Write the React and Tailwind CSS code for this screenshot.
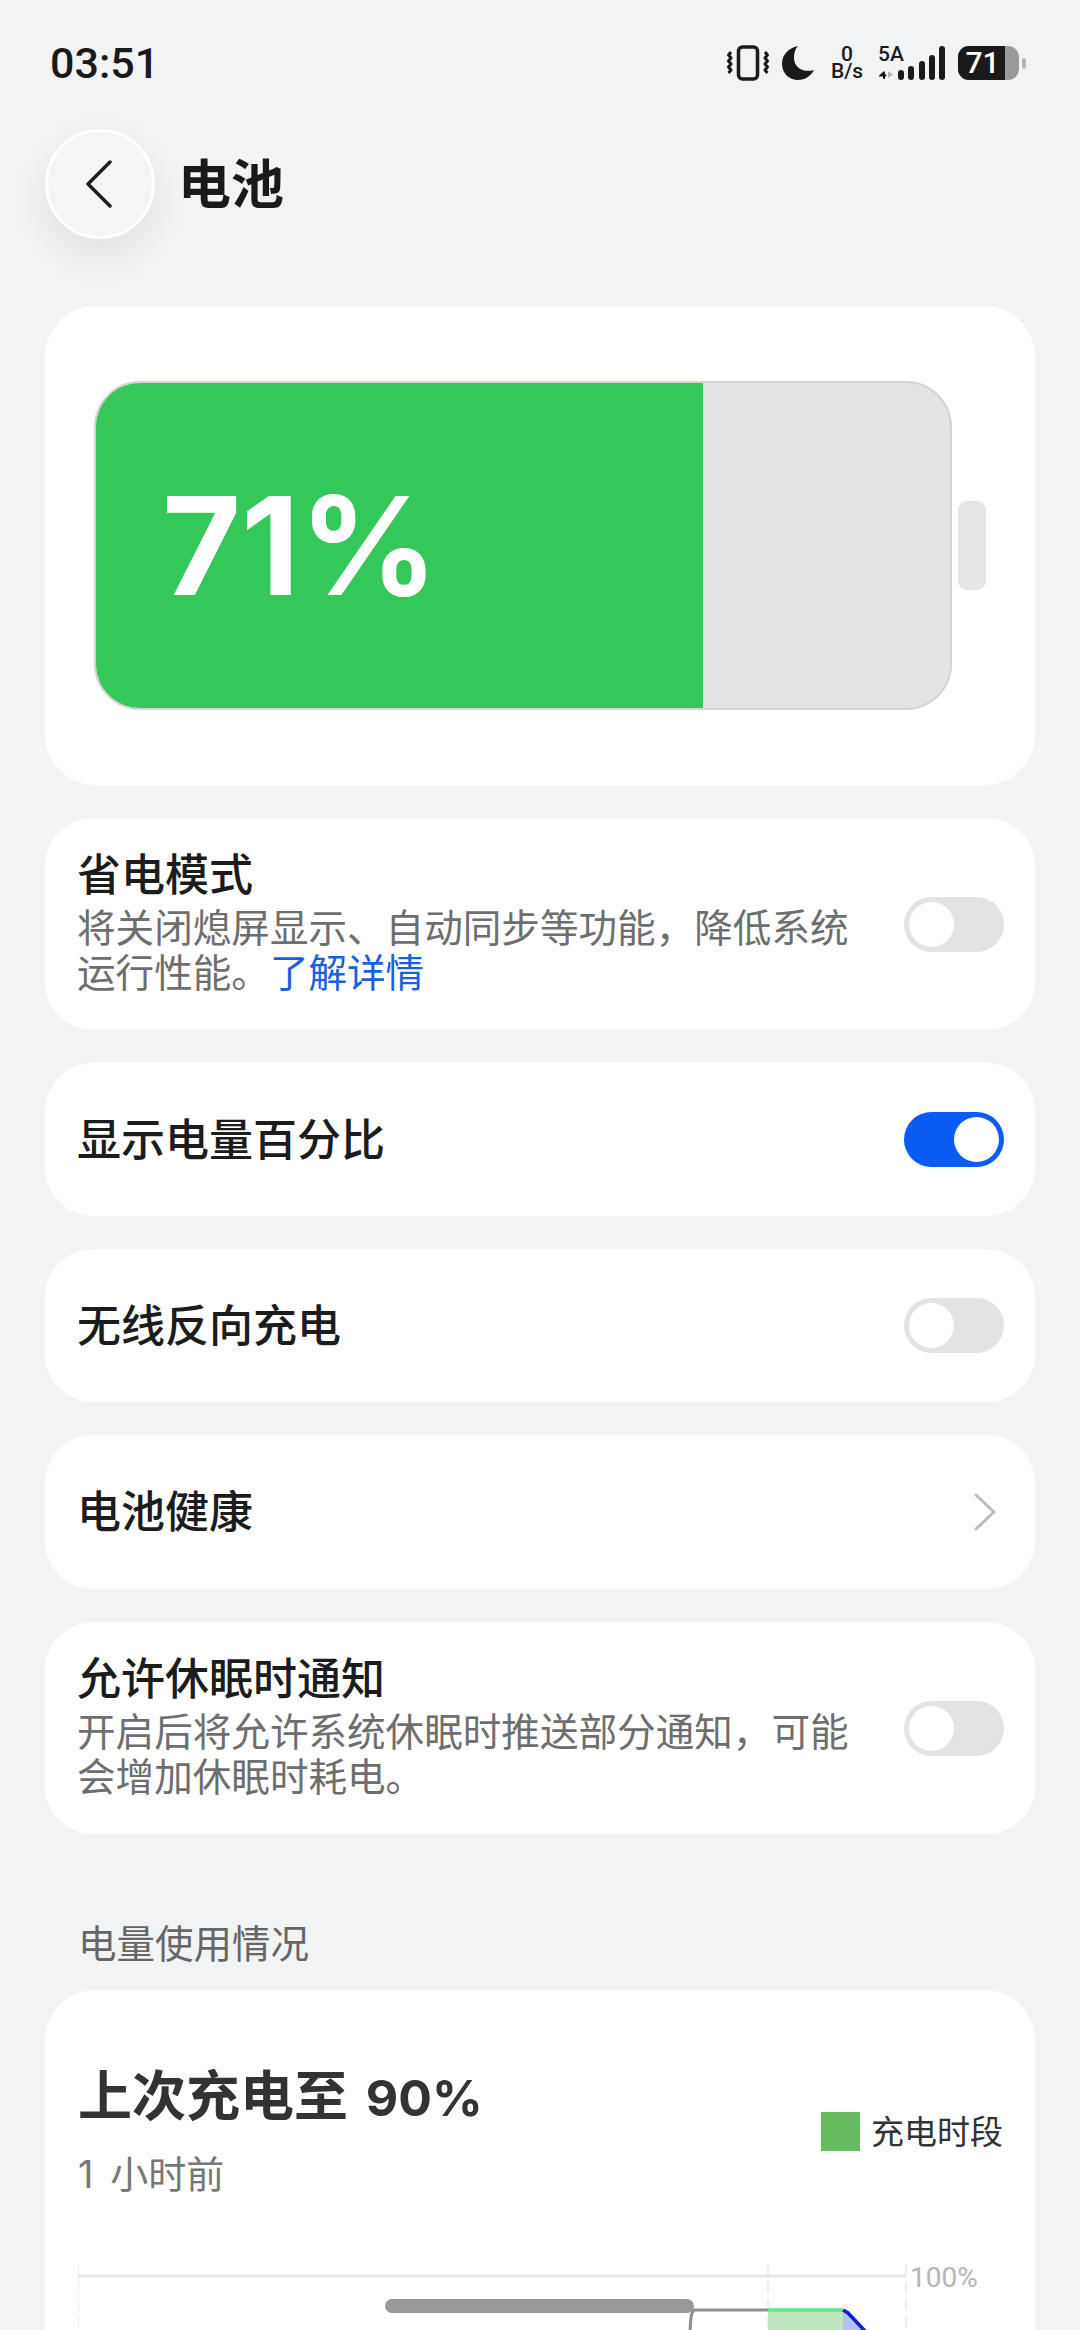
const cjk = "font-['Inter','Noto_Sans_CJK_SC',sans-serif]";

function VibrateIcon() {
  return (
    <svg width="42" height="36" viewBox="0 0 42 36" fill="none" stroke="#1a1a1a">
      <rect x="11.500" y="2" width="19" height="32" rx="4" strokeWidth="3.500" />
      <path d="M4 7l-2.500 3 2.500 3-2.500 3 2.500 3-2.500 3 2.500 3-2.500 3" strokeWidth="3" strokeLinejoin="round" />
      <path d="M38 7l2.500 3-2.500 3 2.500 3-2.500 3 2.500 3-2.500 3 2.500 3" strokeWidth="3" strokeLinejoin="round" />
    </svg>
  );
}

function MoonIcon() {
  return (
    <svg width="32" height="34" viewBox="0 0 32 34" fill="#1a1a1a">
      <path d="M16 0C6 2 0 9 0 18c0 9 7 16 16 16 7 0 13-4 16-10-10 3-20-2-20-12 0-5 1-9 4-12z" />
    </svg>
  );
}

function SignalIcon() {
  return (
    <svg width="68" height="35" viewBox="0 0 68 35" fill="#1a1a1a" className="absolute left-0 top-0">
      <rect x="20" y="24" width="6" height="10" rx="3" />
      <rect x="30" y="20" width="6" height="14" rx="3" />
      <rect x="41" y="15" width="6" height="19" rx="3" />
      <rect x="51" y="9" width="6" height="25" rx="3" />
      <rect x="61" y="0" width="6" height="34" rx="3" />
      <path d="M1 29.500l4.500-4h1.500v2.800h1.200v2.200h-1.200v2.500h-2v-2.500h-4z" />
      <path d="M10 25l5 3.500-5 3.500z" fill="#b5b5b5" />
    </svg>
  );
}

function StatusBar() {
  return (
    <div className="flex h-[129px] items-start justify-between pl-[50px] pr-[54px] pt-[44px] text-[#1a1a1a]">
      <span className="font-['Roboto',sans-serif] text-[43px] leading-[38px] font-medium">03:51</span>
      <div className="flex items-center pt-[1px]">
        <VibrateIcon />
        <div className="ml-[13px]">
          <MoonIcon />
        </div>
        <div className="ml-[17px] flex w-[32px] flex-col items-center font-['Roboto',sans-serif] text-[21px] leading-[17px] font-medium">
          <span>0</span>
          <span>B/s</span>
        </div>
        <div className="relative ml-[15px] h-[35px] w-[68px]">
          <SignalIcon />
          <span className="absolute left-[0px] top-[-3px] font-['Roboto',sans-serif] text-[21px] leading-[22px] font-medium">5A</span>
        </div>
        <div className="ml-[12px] flex items-center">
          <div className="flex h-[34px] w-[61px] overflow-hidden rounded-[11px] bg-[#999999]">
            <div className="flex w-[47px] items-center justify-center pl-[2px] bg-[#1a1a1a] font-['Roboto',sans-serif] text-[30px] leading-[34px] font-medium text-white">
              71
            </div>
          </div>
          <div className="ml-[3px] h-[11px] w-[4px] rounded-[2px] bg-[#b5b5b5]" />
        </div>
      </div>
    </div>
  );
}

function Toggle({ on }) {
  return (
    <div
      className={
        on
          ? "flex h-[55px] w-[100px] shrink-0 items-center justify-end rounded-full bg-[#0a5cf5] px-[5px]"
          : "flex h-[55px] w-[100px] shrink-0 items-center justify-start rounded-full bg-[#e3e3e3] px-[5px]"
      }
    >
      <div className="h-[45px] w-[45px] rounded-full bg-white" />
    </div>
  );
}

function SimpleRow({ label, children, tall }) {
  return (
    <div
      className={
        tall
          ? "flex h-[154px] items-center justify-between rounded-[48px] bg-white pl-[32px] pr-[31px]"
          : "flex h-[153px] items-center justify-between rounded-[48px] bg-white pl-[32px] pr-[31px]"
      }
    >
      <span className="text-[44px] leading-[50px] font-medium text-[#1c1c1c]">{label}</span>
      {children}
    </div>
  );
}

function DescRow({ label, children }) {
  return (
    <div className="flex h-[212px] items-center justify-between rounded-[48px] bg-white pl-[32px] pr-[31px]">
      <div className="w-[780px]">
        <div className="text-[44px] leading-[46px] font-medium text-[#1c1c1c]">{label}</div>
        <div className="mt-[8px] text-[38.600px] leading-[45px] text-[#6e6e6e]">{children}</div>
      </div>
      <Toggle />
    </div>
  );
}

function BatteryCard() {
  return (
    <div className="flex h-[479px] items-center rounded-[50px] bg-white pl-[49px]">
      <div className="flex h-[329px] w-[858px] overflow-hidden rounded-[46px] border-2 border-[#d4d4d4] bg-[#e4e4e4]">
        <div className="flex h-full w-[607px] items-center bg-[#34c759] pl-[66px] text-[136px] leading-none font-bold text-white">
          71%
        </div>
      </div>
      <div className="ml-[6px] h-[89px] w-[28px] rounded-[9px] bg-[#e5e5e5]" />
    </div>
  );
}

function UsageChart() {
  return (
    <svg width="957" height="80" viewBox="0 0 957 80" fill="none" className="mt-[62px] block">
      <path d="M0 15H828" stroke="#e8e8e8" strokeWidth="3" />
      <path d="M0 4V80M690 4V80M828 4V80" stroke="#e6e6e6" strokeWidth="1.500" strokeDasharray="11 6" />
      <path d="M690 49H765V80H690z" fill="#bfe6c0" />
      <path d="M765 49l5 3 17 18v10h-22z" fill="#b3c1f5" />
      <path d="M614 49H690" stroke="#8f8f8f" strokeWidth="3" />
      <path d="M616 49c-3 2-4 10-4 31" stroke="#8f8f8f" strokeWidth="3" />
      <path d="M690 49H765" stroke="#5fe88c" strokeWidth="3.500" />
      <path d="M765 49l5 3 18 19" stroke="#0a1fcc" strokeWidth="3.500" />
      <text x="832" y="26" fontSize="28" fill="#b5b5b5" fontFamily="Roboto, sans-serif">
        100%
      </text>
    </svg>
  );
}

function UsageCard() {
  return (
    <div className="mt-[24px] h-[400px] rounded-[50px] bg-white pl-[33px] pt-[80px]">
      <div className="flex items-center justify-between pr-[32px]">
        <div>
          <div className="text-[54px] leading-[54px] font-bold [word-spacing:5px] text-[#333333]">
            上次充电至 <span className="text-[50px]">90%</span>
          </div>
          <div className="mt-[24px] text-[38px] leading-[50px] [word-spacing:6px] text-[#777777]">1 小时前</div>
        </div>
        <div className="mb-[6px] flex items-center gap-[11px]">
          <div className="h-[39px] w-[39px] bg-[#66bb60]" />
          <span className="text-[33px] leading-[40px] text-[#333333]">充电时段</span>
        </div>
      </div>
      <UsageChart />
    </div>
  );
}

export default function App() {
  return (
    <div className={`relative h-[2330px] w-[1080px] overflow-hidden bg-[#f2f3f5] ${cjk}`}>
      <StatusBar />
      <div className="flex h-[177px] items-start pl-[45px]">
        <div className="flex h-[110px] w-[110px] items-center justify-center rounded-full border-[3px] border-white bg-[#f4f5f7] shadow-[0_16px_40px_rgba(0,0,0,0.08)]">
          <svg width="28" height="48" viewBox="0 0 28 48" fill="none" stroke="#1f1f1f" strokeWidth="3.500" strokeLinecap="round" strokeLinejoin="round" className="mr-[3px]">
            <path d="M25 2L3 24l22 22" />
          </svg>
        </div>
        <h1 className="ml-[23px] mt-[27px] text-[53px] leading-[58px] font-bold text-[#1a1a1a]">电池</h1>
      </div>
      <div className="flex flex-col gap-[33px] px-[45px]">
        <BatteryCard />
        <DescRow label="省电模式">
          将关闭熄屏显示、自动同步等功能，降低系统运行性能。<span className="text-[#1a5fdd]">了解详情</span>
        </DescRow>
        <SimpleRow label="显示电量百分比">
          <Toggle on />
        </SimpleRow>
        <SimpleRow label="无线反向充电">
          <Toggle />
        </SimpleRow>
        <SimpleRow label="电池健康" tall>
          <svg width="22" height="38" viewBox="0 0 22 38" fill="none" stroke="#bcbcbc" strokeWidth="3" strokeLinecap="round" strokeLinejoin="round" className="mr-[8px]">
            <path d="M2 2l18 17L2 36" />
          </svg>
        </SimpleRow>
        <DescRow label="允许休眠时通知">开启后将允许系统休眠时推送部分通知，可能会增加休眠时耗电。</DescRow>
      </div>
      <div className="mx-[45px]">
        <div className="mt-[88px] pl-[33px] text-[38.500px] leading-[44px] text-[#666666]">电量使用情况</div>
        <UsageCard />
      </div>
      <div className="absolute bottom-[17px] left-[385px] h-[14px] w-[309px] rounded-full bg-[#999999]" />
    </div>
  );
}
